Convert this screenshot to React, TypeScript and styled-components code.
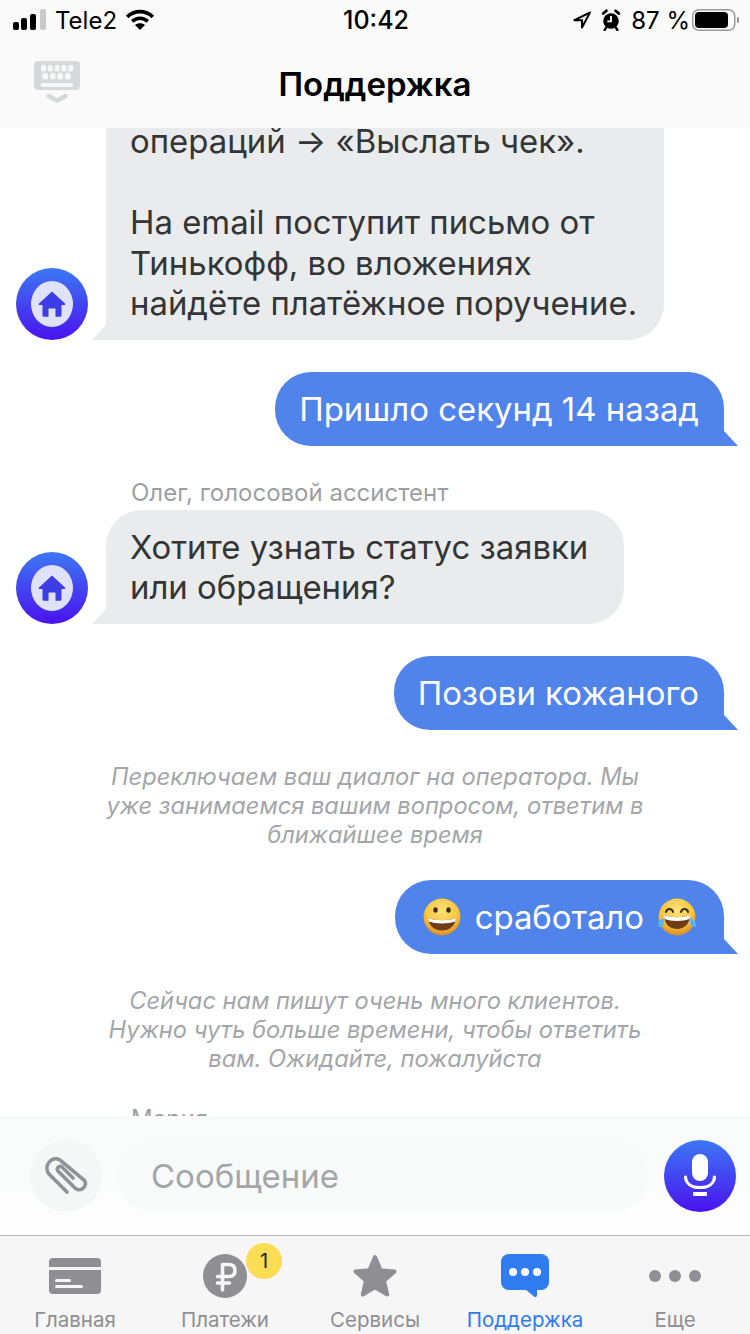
import * as React from 'react'
import styled, { createGlobalStyle } from 'styled-components'

const GlobalStyle = createGlobalStyle`
  html, body {
    margin: 0;
    padding: 0;
    background: #ffffff;
  }
  * {
    box-sizing: border-box;
  }
`

const fontStack = `Inter, "Noto Sans", "Liberation Sans", sans-serif`
const brandGradient = 'linear-gradient(180deg, #3b78f4 0%, #4a12ee 100%)'

const Screen = styled.div`
  width: 750px;
  height: 1334px;
  display: flex;
  flex-direction: column;
  overflow: hidden;
  background: #ffffff;
  font-family: ${fontStack};
`

const Header = styled.header`
  flex: 0 0 128px;
  background: #fafafa;
  display: flex;
  flex-direction: column;
`

const StatusBar = styled.div`
  height: 40px;
  padding: 0 11px 0 13px;
  display: flex;
  align-items: center;
  justify-content: space-between;
  font-size: 24px;
  color: #000000;
`

const StatusSide = styled.div`
  flex: 1;
  display: flex;
  align-items: center;
  gap: 8px;
`

const StatusSideRight = styled(StatusSide)`
  justify-content: flex-end;
  gap: 10px;
`

const BatteryWrap = styled.div`
  margin-left: -8px;
  line-height: 0;
`

const Time = styled.div`
  font-weight: 500;
  font-size: 25px;
`

const NavBar = styled.div`
  flex: 1;
  position: relative;
  display: flex;
  align-items: center;
  justify-content: center;
`

const NavTitle = styled.h1`
  margin: 0;
  font-size: 33px;
  font-weight: 600;
  color: #000000;
`

const KeyboardButton = styled.div`
  position: absolute;
  left: 34px;
  top: 21px;
  line-height: 0;
`

const Chat = styled.main`
  flex: 1;
  min-height: 0;
  overflow: hidden;
  display: flex;
  flex-direction: column;
  gap: 32px;
  padding: 0 12px 0 16px;
`

const BotRow = styled.div<{ $clipped?: boolean }>`
  display: flex;
  align-items: flex-end;
  gap: 18px;
  margin-top: ${p => (p.$clipped ? '-7px' : '0')};
`

const BotColumn = styled.div`
  display: flex;
  flex-direction: column;
`

const SenderName = styled.div`
  font-size: 24px;
  line-height: 29px;
  padding: 0 0 3px 25px;
  color: #9b9fa4;
`

const NextSenderName = styled(SenderName)`
  margin-left: 90px;
`

const Avatar = styled.div`
  flex: 0 0 72px;
  height: 72px;
  border-radius: 50%;
  background: ${brandGradient};
  display: flex;
  align-items: center;
  justify-content: center;
`

const AvatarFace = styled.div`
  width: 42px;
  height: 46px;
  border-radius: 50%;
  background: #e0e1fb;
  display: flex;
  align-items: center;
  justify-content: center;
`

const BotBubble = styled.div`
  position: relative;
  padding: 16.5px 36px 16.5px 24px;
  width: fit-content;
  background: #e9ebed;
  border-radius: 36px 36px 36px 0;
  color: #333536;
  font-size: 32.9px;
  line-height: 40.5px;

  &::after {
    content: '';
    position: absolute;
    left: -14px;
    bottom: 0;
    border-style: solid;
    border-width: 0 0 15px 14px;
    border-color: transparent transparent #e9ebed transparent;
  }
`

const ClippedBubble = styled(BotBubble)`
  width: 558px;
  padding: 0 0 16.5px 24px;
  border-top-left-radius: 0;
  border-top-right-radius: 0;
`

const UserRow = styled.div`
  display: flex;
  justify-content: flex-end;
  padding-right: 14px;
`

const UserBubble = styled.div`
  position: relative;
  height: 74px;
  padding: 0 25px 0 24px;
  display: flex;
  align-items: center;
  background: #5184ea;
  border-radius: 36px 36px 0 36px;
  color: #ffffff;
  font-size: 32.9px;

  &::after {
    content: '';
    position: absolute;
    right: -14px;
    bottom: 0;
    border-style: solid;
    border-width: 15px 0 0 14px;
    border-color: transparent transparent transparent #5184ea;
  }
`

const EmojiBubble = styled(UserBubble)`
  padding: 0 27px;
  gap: 13px;
`

const SystemNote = styled.div`
  align-self: center;
  width: 600px;
  margin: 0 0 -1px;
  padding-right: 4px;
  text-align: center;
  font-size: 23.7px;
  font-style: italic;
  line-height: 29px;
  color: #a3a6aa;
`

const Composer = styled.div`
  flex: 0 0 119px;
  padding: 24px 14px 0 30px;
  display: flex;
  align-items: flex-start;
  gap: 16px;
  background: linear-gradient(180deg, #f9fafa 0%, #fefefe 100%);
`

const RoundButton = styled.div<{ $primary?: boolean }>`
  flex: 0 0 72px;
  height: 72px;
  border-radius: 50%;
  background: ${p => (p.$primary ? brandGradient : '#f5f7f7')};
  display: flex;
  align-items: center;
  justify-content: center;
`

const MessageField = styled.div`
  flex: 1;
  height: 72px;
  padding-left: 33px;
  border-radius: 36px;
  background: #f8f9f9;
  display: flex;
  align-items: center;
  font-size: 33px;
  color: #a2a6a9;
`

const TabBar = styled.nav`
  flex: 0 0 99px;
  display: grid;
  grid-template-columns: repeat(5, 150px);
  border-top: 1px solid #b3b3b5;
  background: #f6f6f6;
`

const Tab = styled.div<{ $active?: boolean }>`
  position: relative;
  display: flex;
  flex-direction: column;
  align-items: center;
  justify-content: flex-end;
  height: 98px;
  padding-bottom: 1px;
  font-size: 20.5px;
  line-height: 26px;
  color: ${p => (p.$active ? '#2f7bf0' : '#8e8e93')};
`

const TabIcon = styled.div`
  height: 62px;
  display: flex;
  align-items: center;
  justify-content: center;
  line-height: 0;
`

const Badge = styled.div`
  position: absolute;
  top: 7px;
  left: 96px;
  width: 36px;
  height: 36px;
  border-radius: 50%;
  background: #fbdc55;
  display: flex;
  align-items: center;
  justify-content: center;
  color: #222222;
  font-size: 20px;
`

const SignalIcon = () => (
  <svg width="34" height="24" viewBox="0 0 34 24">
    <rect x="0" y="14" width="6" height="8" rx="2" fill="#000" />
    <rect x="8" y="10" width="6" height="12" rx="2" fill="#000" />
    <rect x="17" y="6" width="6" height="16" rx="2" fill="#000" />
    <rect x="27" y="1" width="6" height="21" rx="2" fill="#c9c9c9" />
  </svg>
)

const WifiIcon = () => (
  <svg width="30" height="22" viewBox="0 0 32 24" fill="none" stroke="#000" strokeWidth="4">
    <path d="M2 8.5C10 1 22 1 30 8.5" />
    <path d="M7.5 13.5C12.5 9 19.5 9 24.5 13.5" />
    <path d="M16 23L10.5 17.5C13.5 15 18.5 15 21.5 17.5Z" fill="#000" stroke="none" />
  </svg>
)

const LocationIcon = () => (
  <svg width="18" height="18" viewBox="0 0 18 18" fill="none" stroke="#000" strokeWidth="2" strokeLinejoin="round">
    <path d="M17 1.5L1.5 9.2H9V16.5Z" />
  </svg>
)

const AlarmIcon = () => (
  <svg width="20" height="22" viewBox="0 0 20 24">
    <circle cx="10" cy="13" r="8.5" fill="#000" />
    <path d="M1.5 5L5 1.8M18.5 5L15 1.8" stroke="#000" strokeWidth="3" strokeLinecap="round" />
    <path d="M10 7.5V13.5H6" stroke="#fff" strokeWidth="2" fill="none" />
    <path d="M4.5 20.5L3 23M15.5 20.5L17 23" stroke="#000" strokeWidth="2.5" strokeLinecap="round" />
  </svg>
)

const BatteryIcon = () => (
  <svg width="47" height="24" viewBox="0 0 47 24">
    <rect x="0.75" y="1.75" width="42" height="20.5" rx="6" fill="none" stroke="#9a9a9a" strokeWidth="1.5" />
    <rect x="3" y="4" width="33" height="16" rx="4" fill="#000" />
    <rect x="45" y="9" width="2" height="6" rx="1" fill="#9a9a9a" />
  </svg>
)

const KeyboardIcon = () => (
  <svg width="46" height="43" viewBox="0 0 46 43">
    <rect width="46" height="29" rx="4" fill="#d6d8d9" />
    <g fill="#f7f7f7">
      {[7, 13.8, 20.6, 27.4, 34.2].map(x => (
        <rect key={x} x={x} y="4" width="5" height="6.5" rx="1.5" />
      ))}
      {[8.5, 16, 23.5, 31].map(x => (
        <rect key={x} x={x} y="12" width="5.5" height="6.5" rx="1.5" />
      ))}
      <rect x="7" y="22" width="32" height="4" rx="1" />
    </g>
    <path d="M14.5 35L23 39.5L31.5 35" fill="none" stroke="#d6d8d9" strokeWidth="4.5" strokeLinecap="round" />
  </svg>
)

const HouseIcon = () => (
  <svg width="28" height="26" viewBox="0 0 28 26">
    <path
      d="M14 0.5L27 12.5C27.6 13.3 27.2 14 26.3 14H23.5V24.5C23.5 25.3 23 25.7 22.3 25.7H17.5V17.5H10.5V25.7H5.7C5 25.7 4.5 25.3 4.5 24.5V14H1.7C0.8 14 0.4 13.3 1 12.5Z"
      fill="#3d3de6"
    />
  </svg>
)

const ClipIcon = () => (
  <svg width="72" height="72" viewBox="0 0 72 72" fill="none" stroke="#8f9398" strokeWidth="3.6" strokeLinecap="round">
    <path d="M37 52L19 34C13 27 21 15 30 20L54 40C59 46 50 53 45 48L28 31C26 28 29.5 25 32 27L43 38" />
  </svg>
)

const MicIcon = () => (
  <svg width="34" height="46" viewBox="0 0 34 46" fill="none" stroke="#fff" strokeLinecap="round">
    <rect x="9" y="1" width="16" height="27" rx="8" fill="#fff" stroke="none" />
    <path d="M2.5 24C3 31 9 34.5 17 34.5S31 31 31.5 24" strokeWidth="3.2" />
    <rect x="10" y="39" width="14" height="4" rx="1" fill="#fff" stroke="none" />
  </svg>
)

const CardIcon = () => (
  <svg width="52" height="36" viewBox="0 0 52 36">
    <rect width="52" height="36" rx="4" fill="#8e8e93" />
    <rect y="9" width="52" height="3" fill="#f6f6f6" />
    <rect x="6" y="21" width="16" height="3" rx="1.5" fill="#f6f6f6" />
    <rect x="6" y="27" width="28" height="3" rx="1.5" fill="#f6f6f6" />
  </svg>
)

const RubleIcon = () => (
  <svg width="44" height="44" viewBox="0 0 44 44">
    <circle cx="22" cy="22" r="22" fill="#8e8e93" />
    <path
      d="M19.5 36V10.5H26C30 10.5 32 13 32 16.5S30 22.5 26 22.5H14.5M14.5 29H26.5"
      fill="none"
      stroke="#f6f6f6"
      strokeWidth="3.6"
      strokeLinecap="round"
      strokeLinejoin="round"
    />
  </svg>
)

const StarIcon = () => (
  <svg width="46" height="46" viewBox="0 0 46 46">
    <path
      d="M23 4L28.6 17.2L42.5 18.4L32 27.7L35.2 41.6L23 34.2L10.8 41.6L14 27.7L3.5 18.4L17.4 17.2Z"
      fill="#8e8e93"
      stroke="#8e8e93"
      strokeWidth="4"
      strokeLinejoin="round"
    />
  </svg>
)

const SupportIcon = () => (
  <svg width="48" height="44" viewBox="0 0 48 44">
    <rect width="48" height="36" rx="8" fill="#2f7bf0" />
    <path d="M24 35H36V41C36 43 34.5 43.6 33 42.5Z" fill="#2f7bf0" />
    <circle cx="12" cy="18" r="4" fill="#fff" />
    <circle cx="24" cy="18" r="4" fill="#fff" />
    <circle cx="36" cy="18" r="4" fill="#fff" />
  </svg>
)

const MoreIcon = () => (
  <svg width="52" height="12" viewBox="0 0 52 12">
    <circle cx="6" cy="6" r="6" fill="#8e8e93" />
    <circle cx="26" cy="6" r="6" fill="#8e8e93" />
    <circle cx="46" cy="6" r="6" fill="#8e8e93" />
  </svg>
)

const EmojiFace = ({ id, children }: { id: string; children: React.ReactNode }) => (
  <svg width="40" height="40" viewBox="0 0 40 40">
    <defs>
      <radialGradient id={id} cx="50%" cy="32%" r="68%">
        <stop offset="0%" stopColor="#ffe27a" />
        <stop offset="65%" stopColor="#f9c43c" />
        <stop offset="100%" stopColor="#d98a24" />
      </radialGradient>
    </defs>
    <circle cx="20" cy="20" r="18.5" fill={`url(#${id})`} />
    {children}
  </svg>
)

const GrinEmoji = () => (
  <EmojiFace id="grin">
    <ellipse cx="13.5" cy="13" rx="2.2" ry="2.8" fill="#3d2a17" />
    <ellipse cx="26.5" cy="13" rx="2.2" ry="2.8" fill="#3d2a17" />
    <path d="M6 21C13 24 27 24 34 21C33.5 29 27 33.5 20 33.5S6.5 29 6 21Z" fill="#6e3d16" />
    <path d="M6 21C13 24 27 24 34 21L33.4 24.5C26 27 14 27 6.6 24.5Z" fill="#fff" />
  </EmojiFace>
)

const LaughEmoji = () => (
  <EmojiFace id="laugh">
    <path d="M9 15C10 11 15 11 16 15M24 15C25 11 30 11 31 15" stroke="#3d2a17" strokeWidth="2" fill="none" strokeLinecap="round" />
    <path d="M7 18C14 21 26 21 33 18C33 27 27 32 20 32S7 27 7 18Z" fill="#6e3d16" />
    <path d="M7 18C14 21 26 21 33 18L32.5 22C26 24.5 14 24.5 7.5 22Z" fill="#fff" />
    <path d="M1 27C1.5 24 3.5 22 6.5 21C7.5 24 7 28 4.5 29.5C2.5 30.5 0.5 29.5 1 27Z" fill="#53b6ee" />
    <path d="M39 27C38.5 24 36.5 22 33.5 21C32.5 24 33 28 35.5 29.5C37.5 30.5 39.5 29.5 39 27Z" fill="#53b6ee" />
  </EmojiFace>
)

const BotAvatar = () => (
  <Avatar>
    <AvatarFace>
      <HouseIcon />
    </AvatarFace>
  </Avatar>
)

const App = () => (
  <>
    <GlobalStyle />
    <Screen>
      <Header>
        <StatusBar>
          <StatusSide>
            <SignalIcon />
            <span>Tele2</span>
            <WifiIcon />
          </StatusSide>
          <Time>10:42</Time>
          <StatusSideRight>
            <LocationIcon />
            <AlarmIcon />
            <span>87 %</span>
            <BatteryWrap>
              <BatteryIcon />
            </BatteryWrap>
          </StatusSideRight>
        </StatusBar>
        <NavBar>
          <KeyboardButton>
            <KeyboardIcon />
          </KeyboardButton>
          <NavTitle>Поддержка</NavTitle>
        </NavBar>
      </Header>

      <Chat>
        <BotRow $clipped>
          <BotAvatar />
          <ClippedBubble>
            операций → «Выслать чек».
            <br />
            <br />
            На email поступит письмо от
            <br />
            Тинькофф, во вложениях
            <br />
            найдёте платёжное поручение.
          </ClippedBubble>
        </BotRow>

        <UserRow>
          <UserBubble>Пришло секунд 14 назад</UserBubble>
        </UserRow>

        <BotRow>
          <BotAvatar />
          <BotColumn>
            <SenderName>Олег, голосовой ассистент</SenderName>
            <BotBubble>
              Хотите узнать статус заявки
              <br />
              или обращения?
            </BotBubble>
          </BotColumn>
        </BotRow>

        <UserRow>
          <UserBubble>Позови кожаного</UserBubble>
        </UserRow>

        <SystemNote>
          Переключаем ваш диалог на оператора. Мы
          <br />
          уже занимаемся вашим вопросом, ответим в
          <br />
          ближайшее время
        </SystemNote>

        <UserRow>
          <EmojiBubble>
            <GrinEmoji />
            сработало
            <LaughEmoji />
          </EmojiBubble>
        </UserRow>

        <SystemNote>
          Сейчас нам пишут очень много клиентов.
          <br />
          Нужно чуть больше времени, чтобы ответить
          <br />
          вам. Ожидайте, пожалуйста
        </SystemNote>

        <BotRow>
          <BotColumn>
            <NextSenderName>Мария</NextSenderName>
          </BotColumn>
        </BotRow>
      </Chat>

      <Composer>
        <RoundButton>
          <ClipIcon />
        </RoundButton>
        <MessageField>Сообщение</MessageField>
        <RoundButton $primary>
          <MicIcon />
        </RoundButton>
      </Composer>

      <TabBar>
        <Tab>
          <TabIcon>
            <CardIcon />
          </TabIcon>
          Главная
        </Tab>
        <Tab>
          <TabIcon>
            <RubleIcon />
          </TabIcon>
          Платежи
          <Badge>1</Badge>
        </Tab>
        <Tab>
          <TabIcon>
            <StarIcon />
          </TabIcon>
          Сервисы
        </Tab>
        <Tab $active>
          <TabIcon>
            <SupportIcon />
          </TabIcon>
          Поддержка
        </Tab>
        <Tab>
          <TabIcon>
            <MoreIcon />
          </TabIcon>
          Еще
        </Tab>
      </TabBar>
    </Screen>
  </>
)

export default App
